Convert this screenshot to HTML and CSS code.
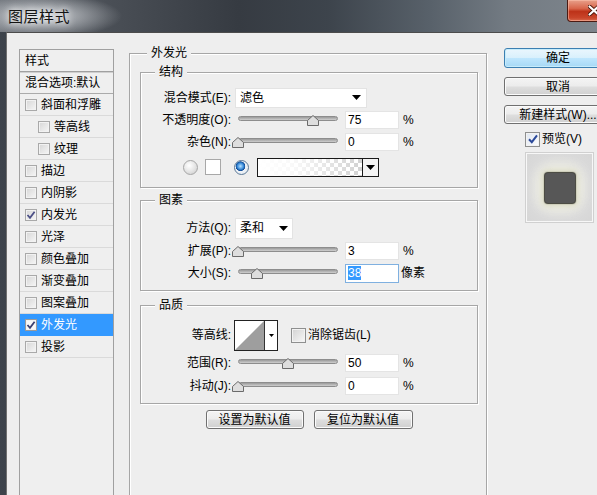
FILE: index.html
```html
<!DOCTYPE html>
<html lang="zh-CN">
<head>
<meta charset="utf-8">
<title>图层样式</title>
<link rel="stylesheet" href="styles.css">
</head>
<body>
<div class="window">
  <header class="titlebar">
    <span class="title">图层样式</span>
    <span class="close"><svg width="12" height="11" viewBox="0 0 12 11"><path d="M1.5 1.5 10.5 9.5M10.5 1.5 1.5 9.5" stroke="#4a1408" stroke-width="4" stroke-linecap="round"/><path d="M1.5 1.5 10.5 9.5M10.5 1.5 1.5 9.5" stroke="#fff" stroke-width="2.2" stroke-linecap="round"/></svg></span>
  </header>
  <div class="frame">
    <div class="client">
      <ul class="styles-list">
        <li class="list-head">样式</li>
        <li class="list-blend">混合选项:默认</li>
        <li><span class="cb"></span>斜面和浮雕</li>
        <li class="sub"><span class="cb"></span>等高线</li>
        <li class="sub"><span class="cb"></span>纹理</li>
        <li><span class="cb"></span>描边</li>
        <li><span class="cb"></span>内阴影</li>
        <li><span class="cb"><svg width="10" height="10" viewBox="0 0 10 10"><path d="M1.5 5 4 7.8 8.6 1.8" fill="none" stroke="#4b4f86" stroke-width="1.8"/></svg></span>内发光</li>
        <li><span class="cb"></span>光泽</li>
        <li><span class="cb"></span>颜色叠加</li>
        <li><span class="cb"></span>渐变叠加</li>
        <li><span class="cb"></span>图案叠加</li>
        <li class="sel"><span class="cb white"><svg width="10" height="10" viewBox="0 0 10 10"><path d="M1.5 5 4 7.8 8.6 1.8" fill="none" stroke="#3b3f70" stroke-width="1.8"/></svg></span>外发光</li>
        <li><span class="cb"></span>投影</li>
      </ul>

      <main class="panel">
        <fieldset class="group outer">
          <legend>外发光</legend>

          <fieldset class="group inner">
            <legend>结构</legend>
            <div class="rows structure">
              <div class="row first">
                <span class="lbl">混合模式(E):</span>
                <span class="select wide">滤色<svg width="9" height="5" viewBox="0 0 9 5"><path d="M0 0H9L4.5 5Z"/></svg></span>
              </div>
              <div class="row gap1">
                <span class="lbl">不透明度(O):</span>
                <span class="slider"><span class="track"></span><svg class="thumb" style="left:75%" width="12" height="11" viewBox="0 0 12 11"><path d="M6 .5 11.5 5.5V10.5H.5V5.5Z" fill="#dedede" stroke="#6b6b6b"/></svg></span>
                <span class="field">75</span><span class="unit">%</span>
              </div>
              <div class="row">
                <span class="lbl">杂色(N):</span>
                <span class="slider"><span class="track"></span><svg class="thumb" style="left:0%" width="12" height="11" viewBox="0 0 12 11"><path d="M6 .5 11.5 5.5V10.5H.5V5.5Z" fill="#dedede" stroke="#6b6b6b"/></svg></span>
                <span class="field">0</span><span class="unit">%</span>
              </div>
              <div class="row radio-row">
                <span class="radio"></span>
                <span class="swatch"></span>
                <span class="radio on"></span>
                <span class="gradient"><span class="grad-fill"></span><span class="grad-arrow"><svg width="9" height="5" viewBox="0 0 9 5"><path d="M0 0H9L4.5 5Z"/></svg></span></span>
              </div>
            </div>
          </fieldset>

          <fieldset class="group inner elements">
            <legend>图素</legend>
            <div class="rows elements-rows">
              <div class="row">
                <span class="lbl">方法(Q):</span>
                <span class="select narrow">柔和<svg width="9" height="5" viewBox="0 0 9 5"><path d="M0 0H9L4.5 5Z"/></svg></span>
              </div>
              <div class="row gap1">
                <span class="lbl">扩展(P):</span>
                <span class="slider"><span class="track"></span><svg class="thumb" style="left:0%" width="12" height="11" viewBox="0 0 12 11"><path d="M6 .5 11.5 5.5V10.5H.5V5.5Z" fill="#dedede" stroke="#6b6b6b"/></svg></span>
                <span class="field">3</span><span class="unit">%</span>
              </div>
              <div class="row">
                <span class="lbl">大小(S):</span>
                <span class="slider"><span class="track"></span><svg class="thumb" style="left:19%" width="12" height="11" viewBox="0 0 12 11"><path d="M6 .5 11.5 5.5V10.5H.5V5.5Z" fill="#dedede" stroke="#6b6b6b"/></svg></span>
                <span class="field focus"><span class="hl">38</span></span><span class="unit px">像素</span>
              </div>
            </div>
          </fieldset>

          <fieldset class="group inner quality">
            <legend>品质</legend>
            <div class="rows quality-rows">
              <div class="row tall">
                <span class="lbl">等高线:</span>
                <span class="contour"><svg class="curve" width="29" height="29" viewBox="0 0 29 29"><path d="M0 29 29 0V29Z" fill="#9e9e9e"/></svg><span class="contour-arrow"><svg width="5" height="3" viewBox="0 0 5 3"><path d="M0 0H5L2.5 3Z"/></svg></span></span>
                <span class="cb big"></span><span class="cb-text">消除锯齿(L)</span>
              </div>
              <div class="row gap1">
                <span class="lbl">范围(R):</span>
                <span class="slider"><span class="track"></span><svg class="thumb" style="left:50%" width="12" height="11" viewBox="0 0 12 11"><path d="M6 .5 11.5 5.5V10.5H.5V5.5Z" fill="#dedede" stroke="#6b6b6b"/></svg></span>
                <span class="field">50</span><span class="unit">%</span>
              </div>
              <div class="row gap1">
                <span class="lbl">抖动(J):</span>
                <span class="slider"><span class="track"></span><svg class="thumb" style="left:0%" width="12" height="11" viewBox="0 0 12 11"><path d="M6 .5 11.5 5.5V10.5H.5V5.5Z" fill="#dedede" stroke="#6b6b6b"/></svg></span>
                <span class="field">0</span><span class="unit">%</span>
              </div>
            </div>
          </fieldset>

          <div class="defaults">
            <span class="btn b1">设置为默认值</span>
            <span class="btn b2">复位为默认值</span>
          </div>
        </fieldset>
      </main>

      <aside class="side">
        <span class="btn default">确定</span>
        <span class="btn">取消</span>
        <span class="btn">新建样式(W)...</span>
        <div class="preview-toggle">
          <span class="cb big blue"><svg width="12" height="12" viewBox="0 0 12 12"><path d="M2 6.2 4.8 9.2 10 2.4" fill="none" stroke="#2c4a9a" stroke-width="2"/></svg></span><span class="cb-text">预览(V)</span>
        </div>
        <div class="preview"><span class="preview-square"></span></div>
      </aside>
    </div>
  </div>
</div>
</body>
</html>
```

FILE: styles.css
```css
* { box-sizing: border-box; }
html, body { margin: 0; padding: 0; }
body {
  width: 597px;
  height: 495px;
  overflow: hidden;
  background: #eeeeee;
  font: 12px/16px "Liberation Sans", "Noto Sans CJK SC", sans-serif;
  color: #000;
}
.window {
  width: 597px;
  height: 495px;
  display: flex;
  flex-direction: column;
  overflow: hidden;
}

/* title bar */
.titlebar {
  height: 32px;
  flex: none;
  display: flex;
  justify-content: space-between;
  align-items: flex-start;
  background:
    radial-gradient(ellipse 80px 22px at 42px 16px, rgba(215,218,222,0.95), rgba(215,218,222,0) 100%),
    linear-gradient(90deg, #6c7178 0%, #4a4f56 18%, #363b42 40%, #3d444c 55%, #58616a 72%, #737b83 85%, #7e858c 100%);
}
.title {
  margin: 8px 0 0 8px;
  font: 15px/16px "Noto Sans CJK SC", sans-serif;
  color: #141414;
  letter-spacing: 0.5px;
  text-shadow: 0 0 6px rgba(255,255,255,0.9), 0 0 10px rgba(255,255,255,0.7);
}
.close {
  flex: none;
  width: 54px;
  height: 22px;
  margin-right: -24px;
  display: flex;
  align-items: center;
  justify-content: center;
  border: 1px solid #4b1a12;
  border-top: none;
  border-radius: 0 0 4px 4px;
  background: linear-gradient(#e8a08a 0%, #d8664b 40%, #bd3219 55%, #c9452a 85%, #d86a4e 100%);
  box-shadow: inset 0 0 0 1px rgba(255,200,180,0.5);
}

/* frame + client */
.frame {
  flex: 1;
  display: flex;
  padding-left: 6px;
  background: linear-gradient(90deg, #3d434b 0%, #161b21 60%, #262b31 100%);
}
.client {
  flex: 1;
  display: flex;
  align-items: flex-start;
  padding-left: 12px;
  background: #eeeeee;
  border-left: 1px solid #707070;
  border-top: 1px solid #4c4c4c;
  overflow: hidden;
}

/* left styles list */
.styles-list {
  flex: none;
  list-style: none;
  margin: 16px 0 0 0;
  padding: 0;
  width: 95px;
  height: 470px;
  border: 1px solid #a0a0a0;
  background: #efefef;
}
.styles-list li {
  height: 22px;
  display: flex;
  align-items: center;
  padding-left: 5px;
  white-space: nowrap;
  border-bottom: 1px solid #dadada;
}
.styles-list .list-head { border-bottom: 1px solid #a0a0a0; }
.styles-list .list-blend { border-top: 1px solid #cfcfcf; border-bottom: 1px solid #aaaaaa; }
.styles-list .sub { padding-left: 18px; }
.styles-list .sel { background: #3399ff; color: #fff; border-bottom-color: #3399ff; }

.cb {
  flex: none;
  width: 12px;
  height: 12px;
  margin-right: 4px;
  display: flex;
  align-items: center;
  justify-content: center;
  border: 1px solid #a9a9a9;
  background: linear-gradient(135deg, #d6d6d6 0%, #f6f6f6 100%);
  box-shadow: inset 0 0 0 1px #f2f2f2;
}
.cb.white { background: #f8f8f8; border-color: #9a9a9a; }
.cb.big {
  width: 15px;
  height: 15px;
  margin-right: 2px;
  border-color: #8e8f8f;
  background: linear-gradient(135deg, #d2d2d2 0%, #f8f8f8 100%);
}
.cb.blue { border-color: #8e8f8f; background: linear-gradient(135deg, #dfe6f0, #fdfdfd); }

/* main panel */
.panel {
  flex: none;
  width: 358px;
  margin: 12px 0 0 15px;
}
fieldset.group {
  margin: 0;
  padding: 0;
  min-width: 0;
  border: 1px solid #a6a6a6;
  box-shadow: inset 1px 1px 0 #fff, 1px 1px 0 #fff;
}
fieldset.group > legend {
  padding: 0 4px;
  margin-left: 7px;
  line-height: 16px;
  background: #eeeeee;
}
fieldset.outer {
  height: 480px;
  padding: 0 8px 0 10px;
}
fieldset.inner {
  width: 338px;
  margin-top: 3px;
}
fieldset.inner > legend { margin-left: 14px; }
fieldset.elements { margin-top: 4px; }
fieldset.quality { margin-top: 6px; }

.rows { display: flex; flex-direction: column; }
.structure { padding: 7px 0 9px; }
.elements-rows { padding: 9px 0 6px; }
.quality-rows { padding: 6px 0 6px; }

.row {
  display: flex;
  align-items: center;
  height: 22px;
  white-space: nowrap;
}
.row.first { height: 21px; }
.row.gap1 { margin-top: 1px; }
.row.tall { height: 32px; }
.radio-row { margin-top: 3px; padding-left: 42px; }

.lbl {
  flex: none;
  width: 90px;
  margin-right: 4px;
  text-align: right;
}

.select {
  flex: none;
  display: flex;
  align-items: center;
  justify-content: space-between;
  height: 20px;
  padding: 0 5px 0 4px;
  background: #fff;
  border: 1px solid #e3e3e3;
}
.select.wide { width: 132px; }
.select.narrow { width: 58px; height: 21px; padding-right: 4px; }

.slider {
  flex: none;
  position: relative;
  width: 100px;
  height: 14px;
  margin-left: 3px;
}
.track {
  display: block;
  margin-top: 3px;
  height: 5px;
  border-radius: 3px;
  border: 1px solid #8d8d8d;
  background: linear-gradient(#9a9a9a, #cfcfcf);
}
.thumb {
  position: absolute;
  top: 2px;
  transform: translateX(-50%);
}

.field {
  flex: none;
  width: 54px;
  height: 18px;
  margin-left: 7px;
  padding-left: 2px;
  line-height: 16px;
  background: #fff;
  border: 1px solid #e4e4e4;
}
.field.focus { height: 19px; border-color: #7fb0e0; }
.hl { background: #3399ff; color: #fff; }
.unit { margin-left: 4px; }
.unit.px { margin-left: 2px; }

.radio {
  flex: none;
  width: 15px;
  height: 15px;
  border-radius: 50%;
  border: 1px solid #a6a6a6;
  background: radial-gradient(circle at 40% 35%, #ffffff 0%, #e6e6e6 50%, #c8c8c8 100%);
}
.radio.on {
  margin-left: 13px;
  border-color: #5a7896;
  background:
    radial-gradient(circle at 42% 40%, #b9e2ff 0%, #3c8edc 28%, #0f4a94 42%, rgba(15,74,148,0) 47%),
    radial-gradient(circle at 40% 35%, #ffffff 0%, #dfe6ee 100%);
}
.swatch {
  flex: none;
  width: 16px;
  height: 16px;
  margin-left: 7px;
  background: #fff;
  border: 1px solid #a8a8a8;
}
.gradient {
  flex: none;
  display: flex;
  width: 122px;
  height: 19px;
  margin-left: 8px;
  border: 1px solid #1a1a1a;
  background: #fff;
}
.grad-fill {
  flex: 1;
  background:
    linear-gradient(90deg, #ffffff 0%, rgba(255,255,255,0.85) 35%, rgba(255,255,255,0) 100%),
    repeating-conic-gradient(#d2d2d2 0 25%, #ffffff 0 50%) 0 0 / 8px 8px;
}
.grad-arrow {
  flex: none;
  width: 16px;
  display: flex;
  align-items: center;
  justify-content: center;
  border-left: 1px solid #1a1a1a;
  background: #f4f4f4;
}

.contour {
  flex: none;
  display: flex;
  width: 44px;
  height: 31px;
  margin-left: -1px;
  border: 1px solid #222;
  background: #fff;
}
.curve { display: block; margin: 0; }
.contour-arrow {
  flex: 1;
  display: flex;
  align-items: center;
  justify-content: center;
  border-left: 1px solid #333;
  background: #fff;
}
.quality-rows .cb.big { margin-left: 13px; }
.cb-text { white-space: nowrap; }

.defaults {
  display: flex;
  justify-content: center;
  gap: 10px;
  margin-top: 6px;
}
.btn {
  flex: none;
  display: flex;
  align-items: center;
  justify-content: center;
  height: 19px;
  white-space: nowrap;
  border: 1px solid #707070;
  border-radius: 3px;
  background: linear-gradient(#f4f4f4 0%, #ececec 48%, #dedede 52%, #d0d0d0 100%);
  box-shadow: inset 0 0 0 1px #fbfbfb;
}
.btn.b1 { width: 98px; }
.btn.b2 { width: 99px; }

/* right column */
.side {
  flex: none;
  width: 108px;
  margin: 15px 0 0 17px;
  display: flex;
  flex-direction: column;
}
.side .btn + .btn { margin-top: 9px; }
.btn.default {
  height: 20px;
  border-color: #3c7fb1;
  background: linear-gradient(#eaf6fd 0%, #d9f0fc 48%, #bee6fd 52%, #a7d9f5 100%);
  box-shadow: inset 0 0 0 1px #c7ecfb;
}
.preview-toggle {
  display: flex;
  align-items: center;
  height: 22px;
  margin-top: 4px;
  padding-left: 21px;
}
.preview {
  width: 67px;
  height: 69px;
  margin: 3px 0 0 22px;
  display: flex;
  align-items: center;
  justify-content: center;
  border: 1px solid #f7f7f7;
  outline: 1px solid #d0d0d0;
  background: radial-gradient(circle at 50% 50%, #f2f2ea 0%, #e6e6e0 35%, #dadada 70%, #d6d6d6 100%);
}
.preview-square {
  width: 30px;
  height: 30px;
  border-radius: 3px;
  background: #575757;
  box-shadow: 0 0 1px 1px #3d3d36, 0 0 6px 3px rgba(190,190,150,0.55), 0 0 12px 6px rgba(250,250,240,0.8);
}
```
